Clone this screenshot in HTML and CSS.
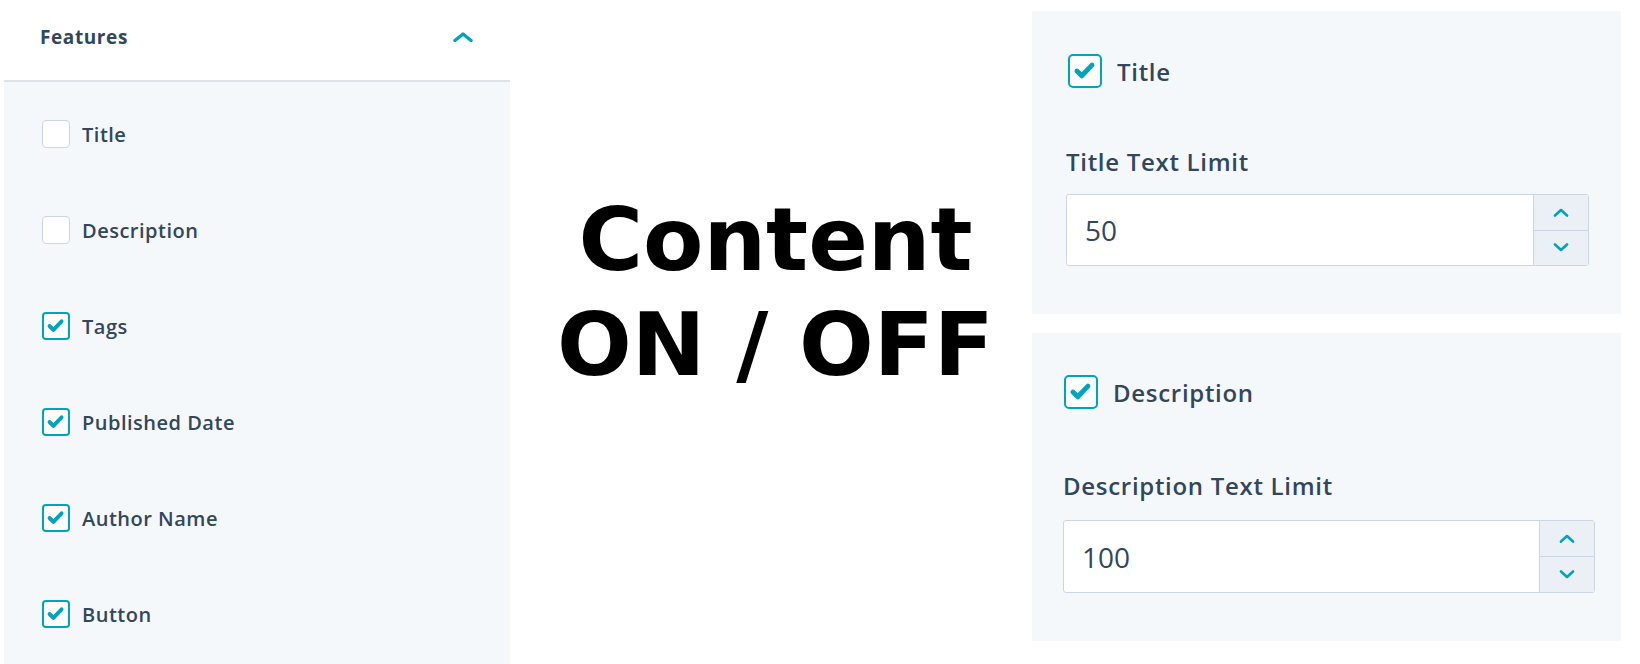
FILE: index.html
```html
<!DOCTYPE html>
<html lang="en">
<head>
    <meta charset="UTF-8">
    <meta name="viewport" content="width=device-width, initial-scale=1.0">
    <title>Content ON / OFF</title>
    <link rel="stylesheet" href="styles.css">
</head>
<body>
<section class="features">
    <header class="features-head">
        <span>Features</span>
        <svg class="chevron" width="20" height="10" viewBox="0 0 20 10">
            <path d="M2 8.5 L10 2 L18 8.5" fill="none" stroke="#00a4bd" stroke-width="3.4" stroke-linecap="round" stroke-linejoin="round"/>
        </svg>
    </header>
    <ul class="features-list">
        <li class="check-row"><span class="box"></span>Title</li>
        <li class="check-row"><span class="box"></span>Description</li>
        <li class="check-row"><span class="box on"><svg viewBox="0 0 28 28"><path d="M6.5 14 L11 18.5 L20.5 8.5"/></svg></span>Tags</li>
        <li class="check-row"><span class="box on"><svg viewBox="0 0 28 28"><path d="M6.5 14 L11 18.5 L20.5 8.5"/></svg></span>Published Date</li>
        <li class="check-row"><span class="box on"><svg viewBox="0 0 28 28"><path d="M6.5 14 L11 18.5 L20.5 8.5"/></svg></span>Author Name</li>
        <li class="check-row"><span class="box on"><svg viewBox="0 0 28 28"><path d="M6.5 14 L11 18.5 L20.5 8.5"/></svg></span>Button</li>
    </ul>
</section>

<div class="headline">
    <h1>Content<br>ON / OFF</h1>
</div>

<div class="limits">
    <div class="limit-panel title-panel">
        <div class="check-row lg"><span class="box on"><svg viewBox="0 0 28 28"><path d="M6.5 14 L11 18.5 L20.5 8.5"/></svg></span>Title</div>
        <label class="field-label" for="title-limit">Title Text Limit</label>
        <div class="number-input">
            <input id="title-limit" type="text" value="50" readonly>
            <div class="spinner">
                <span><svg width="16" height="9" viewBox="0 0 16 9"><path d="M2 7.5 L8 2 L14 7.5"/></svg></span>
                <span><svg width="16" height="9" viewBox="0 0 16 9"><path d="M2 1.5 L8 7 L14 1.5"/></svg></span>
            </div>
        </div>
    </div>
    <div class="limit-panel desc-panel">
        <div class="check-row lg"><span class="box on"><svg viewBox="0 0 28 28"><path d="M6.5 14 L11 18.5 L20.5 8.5"/></svg></span>Description</div>
        <label class="field-label" for="desc-limit">Description Text Limit</label>
        <div class="number-input">
            <input id="desc-limit" type="text" value="100" readonly>
            <div class="spinner">
                <span><svg width="16" height="9" viewBox="0 0 16 9"><path d="M2 7.5 L8 2 L14 7.5"/></svg></span>
                <span><svg width="16" height="9" viewBox="0 0 16 9"><path d="M2 1.5 L8 7 L14 1.5"/></svg></span>
            </div>
        </div>
    </div>
</div>
</body>
</html>
```

FILE: styles.css
```css
body {
    display: flex;
    height: 100vh;
    margin: 0;
    background-color: #fff;
    color: #33475b;
    font-family: 'Open Sans', 'Noto Sans', sans-serif;
    overflow: hidden;
}

/* left column */
.features {
    width: 506px;
    margin-left: 4px;
    display: flex;
    flex-direction: column;
}

.features-head {
    height: 82px;
    box-sizing: border-box;
    padding: 0 37px 6px 36px;
    display: flex;
    align-items: center;
    justify-content: space-between;
    border-bottom: 2px solid #dbe2ea;
    font-size: 19px;
    font-weight: 700;
    letter-spacing: .6px;
}

.features-list {
    flex: 1;
    margin: 0;
    padding: 38px 0 0 38px;
    list-style: none;
    background-color: #f5f8fa;
    display: flex;
    flex-direction: column;
    gap: 68px;
}

.check-row {
    display: flex;
    align-items: center;
    gap: 12px;
    height: 28px;
    font-size: 20px;
    font-weight: 600;
    letter-spacing: .5px;
}

.box {
    width: 28px;
    height: 28px;
    box-sizing: border-box;
    border: 1.5px solid #cbd6e2;
    border-radius: 4px;
    background-color: #fff;
    flex: none;
}

.box.on {
    border: 2px solid #00a4bd;
}

.box svg {
    display: block;
    width: 100%;
    height: 100%;
}

.box svg path {
    fill: none;
    stroke: #00a4bd;
    stroke-width: 4.6;
    stroke-linecap: round;
    stroke-linejoin: round;
}

/* middle title */
.headline {
    flex: 1;
    padding: 187px 0 0 9px;
}

.headline h1 {
    margin: 0;
    text-align: center;
    font-family: 'DejaVu Sans', sans-serif;
    font-size: 88px;
    line-height: 105px;
    font-weight: 700;
    color: #000;
}

/* right column */
.limits {
    width: 589px;
    margin: 11px 19px 0 0;
    display: flex;
    flex-direction: column;
    gap: 19px;
}

.limit-panel {
    background-color: #f5f8fa;
    display: flex;
    flex-direction: column;
}

.title-panel {
    padding: 43px 32px 48px 34px;
}

.desc-panel {
    padding: 42px 26px 48px 31px;
}

.check-row.lg {
    height: 34px;
    gap: 15px;
    font-size: 24px;
    letter-spacing: .7px;
    padding-left: 2px;
}

.desc-panel .check-row.lg {
    padding-left: 1px;
}

.check-row.lg .box {
    width: 34px;
    height: 34px;
    border-width: 2.4px;
    border-radius: 5px;
}

.field-label {
    margin-top: 58px;
    line-height: 32px;
    font-size: 24px;
    font-weight: 600;
    letter-spacing: .7px;
}

.desc-panel .field-label {
    margin-top: 61px;
}

.number-input {
    margin-top: 16px;
    height: 72px;
    box-sizing: border-box;
    display: flex;
    border: 1px solid #cbd6e2;
    border-radius: 3px;
    background-color: #fff;
}

.desc-panel .number-input {
    margin-top: 18px;
    height: 73px;
}

.number-input input {
    flex: 1;
    min-width: 0;
    border: none;
    outline: none;
    padding: 0 0 0 18px;
    background: transparent;
    font-family: 'Open Sans', sans-serif;
    font-size: 28px;
    color: #33475b;
}

.spinner {
    width: 54px;
    display: flex;
    flex-direction: column;
    border-left: 1px solid #cbd6e2;
    background-color: #eaf0f6;
}

.spinner span {
    flex: 1;
    display: flex;
    align-items: center;
    justify-content: center;
}

.spinner span + span {
    border-top: 1px solid #cbd6e2;
}

.spinner path {
    fill: none;
    stroke: #00a4bd;
    stroke-width: 2.6;
    stroke-linecap: round;
    stroke-linejoin: round;
}
```
